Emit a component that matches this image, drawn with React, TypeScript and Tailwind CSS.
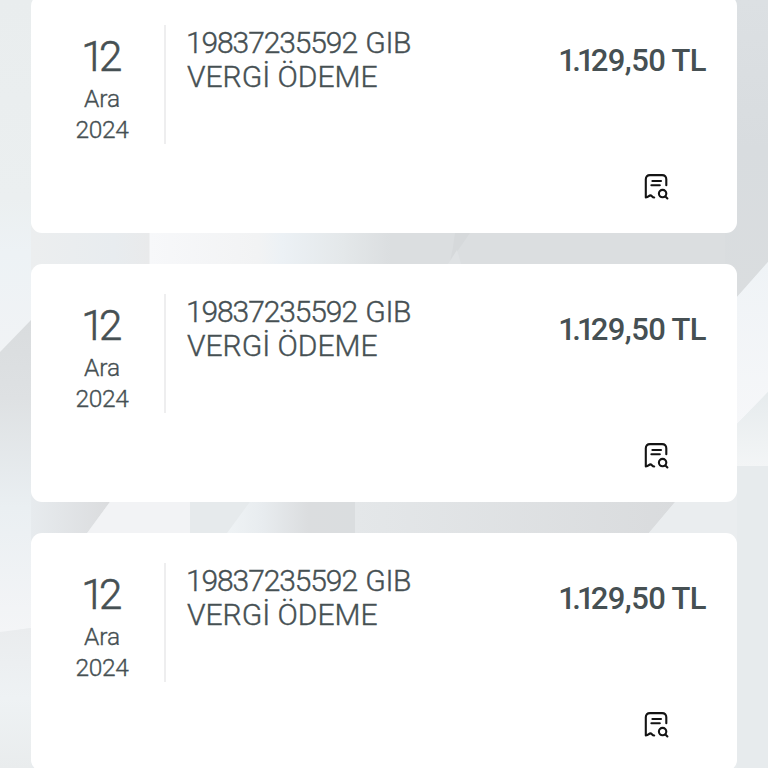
type Transaction = {
  id: number;
  day: string;
  month: string;
  year: string;
  account: string;
  office: string;
  title: string;
  amount: string;
};

const TRANSACTIONS: Transaction[] = [
  { id: 1, day: "12", month: "Ara", year: "2024", account: "19837235592", office: "GIB", title: "VERGİ ÖDEME", amount: "1.129,50 TL" },
  { id: 2, day: "12", month: "Ara", year: "2024", account: "19837235592", office: "GIB", title: "VERGİ ÖDEME", amount: "1.129,50 TL" },
  { id: 3, day: "12", month: "Ara", year: "2024", account: "19837235592", office: "GIB", title: "VERGİ ÖDEME", amount: "1.129,50 TL" },
];

function ReceiptIcon() {
  return (
    <svg width="26" height="28" viewBox="0 0 26 28" fill="none" stroke="currentColor" strokeWidth="2.1" strokeLinecap="round" strokeLinejoin="round">
      <path d="M22.3 12.3V6.3Q22.3 2.1 18.1 2.1H6Q1.8 2.1 1.8 6.3V24.4C4.6 24.4 4.9 22.4 6.4 22.4C7.9 22.4 8 24.5 10.2 24.5" />
      <path d="M8.4 8H17M7.4 12.2H15.8" />
      <circle cx="18.6" cy="20.6" r="3.7" />
      <path d="M21.4 23.4L23.4 25.4" />
    </svg>
  );
}

function Backdrop() {
  return (
    <svg className="absolute inset-0 h-full w-full" viewBox="0 0 768 768" preserveAspectRatio="none">
      <defs>
        <linearGradient id="left" x1="0" y1="0" x2="0" y2="1">
          <stop offset="0" stopColor="#e9edee" />
          <stop offset="0.55" stopColor="#ebeff0" />
          <stop offset="0.7" stopColor="#edf2f5" />
          <stop offset="1" stopColor="#f1f3f5" />
        </linearGradient>
        <linearGradient id="leftShade" x1="0" y1="0" x2="0" y2="1">
          <stop offset="0" stopColor="#d9dcde" />
          <stop offset="0.25" stopColor="#dee1e3" />
          <stop offset="0.6" stopColor="#eaeff2" />
          <stop offset="1" stopColor="#f4f5f7" />
        </linearGradient>
        <linearGradient id="topLeft">
          <stop offset="0" stopColor="#eceeef" />
          <stop offset="0.7" stopColor="#e8ecef" />
          <stop offset="1" stopColor="#e9eaeb" />
        </linearGradient>
        <linearGradient id="topBand">
          <stop offset="0" stopColor="#f7f8fa" />
          <stop offset="0.45" stopColor="#f2f3f4" />
          <stop offset="0.55" stopColor="#ecf1f5" />
          <stop offset="0.8" stopColor="#e4e8ea" />
          <stop offset="1" stopColor="#dbdee0" />
        </linearGradient>
        <linearGradient id="bandShade">
          <stop offset="0" stopColor="#e7ebee" />
          <stop offset="1" stopColor="#dadbdd" />
        </linearGradient>
        <linearGradient id="bandMiddle">
          <stop offset="0" stopColor="#f0f4f6" />
          <stop offset="0.3" stopColor="#e8ecef" />
          <stop offset="0.65" stopColor="#dbdddf" />
          <stop offset="1" stopColor="#dadddf" />
        </linearGradient>
        <linearGradient id="bandRight">
          <stop offset="0" stopColor="#e4e7e9" />
          <stop offset="1" stopColor="#d9dbdd" />
        </linearGradient>
        <linearGradient id="right" x1="0" y1="0" x2="0" y2="1">
          <stop offset="0" stopColor="#dce0e3" />
          <stop offset="0.5" stopColor="#d8dcdf" />
          <stop offset="1" stopColor="#dadddf" />
        </linearGradient>
        <linearGradient id="rightLight" x1="0" y1="0" x2="0" y2="1">
          <stop offset="0" stopColor="#eff3f6" />
          <stop offset="1" stopColor="#f6f7f9" />
        </linearGradient>
        <linearGradient id="rightFade" x1="0" y1="0" x2="0" y2="1">
          <stop offset="0" stopColor="#e6ebed" />
          <stop offset="1" stopColor="#f3f5f6" />
        </linearGradient>
        <linearGradient id="leftBottom" x1="0" y1="0" x2="0" y2="1">
          <stop offset="0" stopColor="#eaecee" />
          <stop offset="0.5" stopColor="#eef2f4" />
          <stop offset="1" stopColor="#e9eced" />
        </linearGradient>
      </defs>

      <rect width="768" height="768" fill="#e8ecee" />
      <rect width="45" height="360" fill="url(#left)" />
      <rect x="31" y="225" width="119" height="45" fill="url(#topLeft)" />
      <rect x="149.5" y="225" width="241" height="45" fill="url(#topBand)" />
      <rect x="390" y="225" width="347" height="45" fill="#dbdee0" />
      <path d="M455 233H470L450 262L453 247Z" fill="#d6d9db" />
      <path d="M457 250L461 264H448Z" fill="#dfe2e4" />

      <path d="M31 320V628L0 633V352Z" fill="url(#leftShade)" />
      <path d="M0 632L31 628V768H0Z" fill="url(#leftBottom)" />

      <path d="M31 495H115L82 540H31Z" fill="url(#bandShade)" />
      <path d="M115 495H190V540H82Z" fill="#f2f3f5" />
      <path d="M190 495H255L222 540H190Z" fill="#e6eaec" />
      <path d="M255 495H355V540H222Z" fill="url(#bandMiddle)" />
      <path d="M355 495H681L643 540H355Z" fill="url(#bandRight)" />
      <path d="M681 495H768V540H643Z" fill="#eaedef" />

      <path d="M725 0H768V262L737 297H725Z" fill="url(#right)" />
      <path d="M768 262V392L737 424V297Z" fill="url(#rightLight)" />
      <path d="M768 392V466H737V424Z" fill="url(#rightFade)" />
      <rect x="737" y="466" width="31" height="302" fill="#e7ebed" />
    </svg>
  );
}

function TransactionCard({ item }: { item: Transaction }) {
  return (
    <article className="flex h-[238px] shrink-0 rounded-[11px] bg-white">
      <div className="mt-[30px] flex h-[119px] w-[135px] shrink-0 flex-col items-center border-r-2 border-[#eeeeef] pl-[9px] pt-[11px] text-[24.5px] leading-[30.5px] [-webkit-text-stroke:0.35px_#465053]">
        <span className="mb-[6px] mr-[6px] text-[42px] leading-[42px] tracking-[-5.5px] [-webkit-text-stroke:0.6px_#465053]">{item.day}</span>
        <span>{item.month}</span>
        <span className="tracking-[-0.4px]">{item.year}</span>
      </div>
      <h2 className="mt-[31px] flex-1 whitespace-nowrap pl-[20px] text-[30px] leading-[33.5px] [-webkit-text-stroke:0.4px_#465053]">
        <span className="block tracking-[-1.1px]">
          {item.account} <span className="ml-[2px] tracking-[-0.3px]">{item.office}</span>
        </span>
        <span className="ml-px block">{item.title}</span>
      </h2>
      <div className="flex flex-col items-end">
        <p className="mt-[48px] pr-[31px] text-[31px] font-medium leading-[36px] tracking-[-0.6px]">
          <span className="tracking-[-3.8px]">{item.amount.slice(0, 3)}</span>
          {item.amount.slice(3)}
        </p>
        <button className="mr-[67px] mt-[94px] text-[#141414]" aria-label="Dekont">
          <ReceiptIcon />
        </button>
      </div>
    </article>
  );
}

export default function App() {
  return (
    <main className="relative h-[768px] w-[768px] overflow-hidden font-['Roboto',sans-serif] font-light text-[#465053]">
      <Backdrop />
      <div className="relative -mt-[5px] flex flex-col gap-[31px] px-[31px]">
        {TRANSACTIONS.map((item) => (
          <TransactionCard key={item.id} item={item} />
        ))}
      </div>
    </main>
  );
}
